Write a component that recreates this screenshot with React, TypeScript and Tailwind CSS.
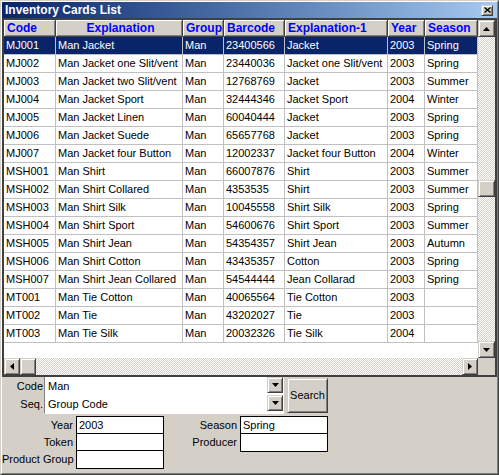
import React from "react";

type Row = [string, string, string, string, string, string, string];

const ROWS: Row[] = [
  ["MJ001", "Man Jacket", "Man", "23400566", "Jacket", "2003", "Spring"],
  ["MJ002", "Man Jacket one Slit/vent", "Man", "23440036", "Jacket one Slit/vent", "2003", "Spring"],
  ["MJ003", "Man Jacket two Slit/vent", "Man", "12768769", "Jacket", "2003", "Summer"],
  ["MJ004", "Man Jacket Sport", "Man", "32444346", "Jacket Sport", "2004", "Winter"],
  ["MJ005", "Man Jacket Linen", "Man", "60040444", "Jacket", "2003", "Spring"],
  ["MJ006", "Man Jacket Suede", "Man", "65657768", "Jacket", "2003", "Spring"],
  ["MJ007", "Man Jacket four Button", "Man", "12002337", "Jacket four Button", "2004", "Winter"],
  ["MSH001", "Man Shirt", "Man", "66007876", "Shirt", "2003", "Summer"],
  ["MSH002", "Man Shirt Collared", "Man", "4353535", "Shirt", "2003", "Summer"],
  ["MSH003", "Man Shirt Silk", "Man", "10045558", "Shirt Silk", "2003", "Spring"],
  ["MSH004", "Man Shirt Sport", "Man", "54600676", "Shirt Sport", "2003", "Summer"],
  ["MSH005", "Man Shirt Jean", "Man", "54354357", "Shirt Jean", "2003", "Autumn"],
  ["MSH006", "Man Shirt Cotton", "Man", "43435357", "Cotton", "2003", "Spring"],
  ["MSH007", "Man Shirt Jean Collared", "Man", "54544444", "Jean Collarad", "2003", "Spring"],
  ["MT001", "Man Tie Cotton", "Man", "40065564", "Tie Cotton", "2003", ""],
  ["MT002", "Man Tie", "Man", "43202027", "Tie", "2003", ""],
  ["MT003", "Man Tie Silk", "Man", "20032326", "Tie Silk", "2004", ""],
];

const COLS = [
  { label: "Code", w: "w-[52px]", head: "justify-start" },
  { label: "Explanation", w: "w-[127px]", head: "justify-center" },
  { label: "Group", w: "w-[41px]", head: "justify-start" },
  { label: "Barcode", w: "w-[61px]", head: "justify-start" },
  { label: "Explanation-1", w: "w-[103px]", head: "justify-start" },
  { label: "Year", w: "w-[37px]", head: "justify-start" },
  { label: "Season", w: "w-[53px]", head: "justify-start" },
];

// classic raised 3D edge
const RAISED =
  "border border-t-[#d4d0c8] border-l-[#d4d0c8] border-r-[#404040] border-b-[#404040] bg-[#d4d0c8] shadow-[inset_1px_1px_#ffffff,inset_-1px_-1px_#808080]";

const DITHER =
  "bg-[image:repeating-conic-gradient(#d4d0c8_0_25%,#ffffff_0_50%)] bg-[length:2px_2px]";

function Arrow({ dir }: { dir: "up" | "down" | "left" | "right" }) {
  const pts = {
    up: "3.5,0 7,4 0,4",
    down: "0,0 7,0 3.5,4",
    left: "4,0 4,7 0,3.5",
    right: "0,0 4,3.5 0,7",
  }[dir];
  const vertical = dir === "up" || dir === "down";
  return (
    <svg
      width={vertical ? 7 : 4}
      height={vertical ? 4 : 7}
      viewBox={vertical ? "0 0 7 4" : "0 0 4 7"}
      aria-hidden
    >
      <polygon points={pts} fill="#000" />
    </svg>
  );
}

function ScrollButton({ dir, className }: { dir: "up" | "down" | "left" | "right"; className: string }) {
  return (
    <div className={`flex shrink-0 items-center justify-center ${RAISED} ${className}`}>
      <Arrow dir={dir} />
    </div>
  );
}

function Combo({ value }: { value: string }) {
  return (
    <div className="flex h-[18px] bg-white">
      <div className="flex-1 pl-[3px] leading-[18px]">{value}</div>
      <div className={`flex h-[16px] w-[16px] items-center justify-center ${RAISED}`}>
        <Arrow dir="down" />
      </div>
    </div>
  );
}

function FieldStack({ labels, values, labelW }: { labels: string[]; values: string[]; labelW: string }) {
  return (
    <div className="flex">
      <div className={`flex flex-col pt-[1px] pr-[3px] text-right ${labelW}`}>
        {labels.map((l) => (
          <div key={l} className="h-[17px] leading-[17px] whitespace-nowrap">
            {l}
          </div>
        ))}
      </div>
      <div className="w-[88px] self-start border border-black bg-white">
        {values.map((v, i) => (
          <div
            key={i}
            className={`h-[17px] pl-[2px] leading-[16px] ${i < values.length - 1 ? "border-b border-black" : "h-[16px]"}`}
          >
            {v}
          </div>
        ))}
      </div>
    </div>
  );
}

export default function App() {
  return (
    <div className="h-[475px] w-[499px] border border-t-[#d4d0c8] border-l-[#d4d0c8] border-r-[#404040] border-b-[#404040] bg-[#d4d0c8] font-['Liberation_Sans',Arial,sans-serif] text-[11px] text-black">
      <div className="flex h-full flex-col border border-t-white border-l-white border-r-[#808080] border-b-[#808080]">
        {/* title bar */}
        <div className="flex h-[16px] shrink-0 items-center bg-gradient-to-r from-[#0a246a] to-[#a6caf0] pl-[3px] pr-[4px]">
          <span className="flex-1 text-[12px] leading-none font-bold text-white">Inventory Cards List</span>
          <div className={`flex h-[11px] w-[12px] items-center justify-center ${RAISED}`}>
            <svg width="7" height="6" viewBox="0 0 7 6" aria-hidden>
              <path d="M0.5 0.5L6.5 5.5M6.5 0.5L0.5 5.5" stroke="#000" strokeWidth="1.4" />
            </svg>
          </div>
        </div>

        {/* grid */}
        <div className="flex h-[359px] shrink-0 flex-col border-2 border-[#404040] bg-white">
          <div className="flex h-[338px]">
            <div className="flex w-[474px] flex-col">
              <div className="flex h-[17px] shrink-0">
                {COLS.map((c) => (
                  <div
                    key={c.label}
                    className={`flex h-full shrink-0 items-center whitespace-nowrap border-r border-b border-[#404040] bg-[#d4d0c8] pl-[3px] text-[12px] font-bold text-[#0000ff] shadow-[inset_1px_1px_#ffffff,inset_-1px_-1px_#808080] ${c.w} ${c.head}`}
                  >
                    {c.label}
                  </div>
                ))}
              </div>
              {ROWS.map((r, ri) => (
                <div key={r[0]} className={`flex h-[18px] shrink-0 ${ri === 0 ? "bg-[#0a246a] text-white" : ""}`}>
                  {r.map((v, ci) => (
                    <div
                      key={ci}
                      className={`h-full shrink-0 overflow-hidden whitespace-nowrap border-r border-b border-[#c0c0c0] pl-[2px] leading-[17px] ${COLS[ci].w}`}
                    >
                      {v}
                    </div>
                  ))}
                </div>
              ))}
            </div>
            {/* vertical scrollbar */}
            <div className={`flex w-[17px] flex-col ${DITHER}`}>
              <ScrollButton dir="up" className="h-[17px] w-[17px]" />
              <div className="flex-1">
                <div className={`mt-[143px] h-[17px] w-[17px] ${RAISED}`} />
              </div>
              <ScrollButton dir="down" className="h-[17px] w-[17px]" />
            </div>
          </div>
          {/* horizontal scrollbar */}
          <div className="flex h-[17px]">
            <div className={`flex w-[474px] ${DITHER}`}>
              <ScrollButton dir="left" className="h-[17px] w-[16px]" />
              <div className={`h-[17px] w-[16px] ${RAISED}`} />
              <div className="flex-1" />
              <ScrollButton dir="right" className="h-[17px] w-[16px]" />
            </div>
            <div className="flex-1 bg-[#d4d0c8]" />
          </div>
        </div>

        {/* search panel */}
        <div className="flex flex-1 flex-col">
          <div className="flex">
            <div className="flex w-[42px] flex-col pr-[1px] text-right">
              <div className="h-[18px] leading-[19px]">Code</div>
              <div className="h-[18px] leading-[18px]">Seq.</div>
            </div>
            <div className="w-[240px] border-l border-r border-b border-l-[#808080] border-r-white border-b-white">
              <Combo value="Man" />
              <Combo value="Group Code" />
            </div>
            <button
              type="button"
              className={`mt-[1px] ml-[3px] h-[35px] w-[41px] text-[11px] ${RAISED}`}
            >
              Search
            </button>
          </div>
          <div className="mt-[2px] flex">
            <FieldStack labelW="w-[74px]" labels={["Year", "Token", "Product Group"]} values={["2003", "", ""]} />
            <FieldStack labelW="w-[76px]" labels={["Season", "Producer"]} values={["Spring", ""]} />
          </div>
        </div>
      </div>
    </div>
  );
}
